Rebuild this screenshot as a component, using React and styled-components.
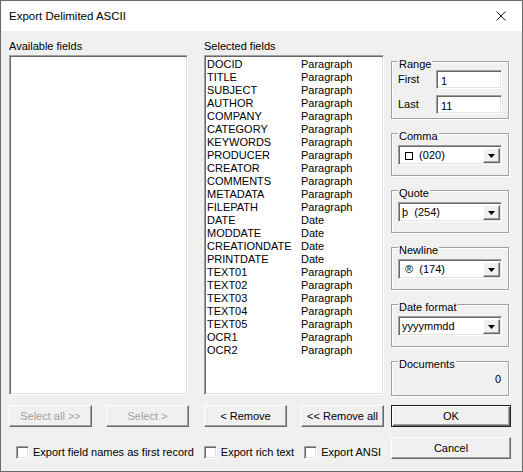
import React from 'react';
import styled, { createGlobalStyle } from 'styled-components';

const GlobalStyle = createGlobalStyle`
  html, body {
    margin: 0;
    padding: 0;
    background: #ffffff;
  }
  * {
    box-sizing: border-box;
  }
`;

const uiFont = `"Liberation Sans", Arial, sans-serif`;

// classic 3D edges
const sunken = `
  border: 1px solid;
  border-color: #a0a0a0 #ffffff #ffffff #a0a0a0;
  box-shadow: inset 1px 1px 0 #696969, inset -1px -1px 0 #e3e3e3;
`;

const raised = `
  border: 1px solid;
  border-color: #ffffff #696969 #696969 #ffffff;
  box-shadow: inset -1px -1px 0 #a0a0a0;
`;

const fields = [
  ['DOCID', 'Paragraph'],
  ['TITLE', 'Paragraph'],
  ['SUBJECT', 'Paragraph'],
  ['AUTHOR', 'Paragraph'],
  ['COMPANY', 'Paragraph'],
  ['CATEGORY', 'Paragraph'],
  ['KEYWORDS', 'Paragraph'],
  ['PRODUCER', 'Paragraph'],
  ['CREATOR', 'Paragraph'],
  ['COMMENTS', 'Paragraph'],
  ['METADATA', 'Paragraph'],
  ['FILEPATH', 'Paragraph'],
  ['DATE', 'Date'],
  ['MODDATE', 'Date'],
  ['CREATIONDATE', 'Date'],
  ['PRINTDATE', 'Date'],
  ['TEXT01', 'Paragraph'],
  ['TEXT02', 'Paragraph'],
  ['TEXT03', 'Paragraph'],
  ['TEXT04', 'Paragraph'],
  ['TEXT05', 'Paragraph'],
  ['OCR1', 'Paragraph'],
  ['OCR2', 'Paragraph'],
];

const DropArrow = () => (
  <svg width="7" height="4" viewBox="0 0 7 4">
    <path d="M0 0h7L3.5 4z" fill="#000" />
  </svg>
);

const CloseGlyph = () => (
  <svg width="10" height="10" viewBox="0 0 10 10">
    <path d="M0.5 0.5l9 9M9.5 0.5l-9 9" stroke="#1a1a1a" strokeWidth="1" fill="none" />
  </svg>
);

export default function App() {
  return (
    <>
      <GlobalStyle />
      <Window>
        <TitleBar>
          <Title>Export Delimited ASCII</Title>
          <CloseButton>
            <CloseGlyph />
          </CloseButton>
        </TitleBar>

        <Body>
          <FieldPanel $area="avail" $width={179}>
            <Caption>Available fields</Caption>
            <ListBox />
          </FieldPanel>

          <FieldPanel $area="sel" $width={180}>
            <Caption>Selected fields</Caption>
            <ListBox>
              {fields.map(([name, type]) => (
                <FieldRow key={name}>
                  <span>{name}</span>
                  <span>{type}</span>
                </FieldRow>
              ))}
            </ListBox>
          </FieldPanel>

          <SideStack>
            <Group $top={0} $bottom={4}>
              <Legend>Range</Legend>
              <RangeRows>
                <RangeRow>
                  <RangeLabel>First</RangeLabel>
                  <TextInput>1</TextInput>
                </RangeRow>
                <RangeRow>
                  <RangeLabel>Last</RangeLabel>
                  <TextInput>11</TextInput>
                </RangeRow>
              </RangeRows>
            </Group>

            <Group>
              <Legend>Comma</Legend>
              <Combo>
                <ComboValue>
                  <MissingGlyph />
                  {'  (020)'}
                </ComboValue>
                <ComboButton>
                  <DropArrow />
                </ComboButton>
              </Combo>
            </Group>

            <Group>
              <Legend>Quote</Legend>
              <Combo>
                <ComboValue>{'þ  (254)'}</ComboValue>
                <ComboButton>
                  <DropArrow />
                </ComboButton>
              </Combo>
            </Group>

            <Group>
              <Legend>Newline</Legend>
              <Combo>
                <ComboValue>{' ®  (174)'}</ComboValue>
                <ComboButton>
                  <DropArrow />
                </ComboButton>
              </Combo>
            </Group>

            <Group>
              <Legend>Date format</Legend>
              <Combo>
                <ComboValue>yyyymmdd</ComboValue>
                <ComboButton>
                  <DropArrow />
                </ComboButton>
              </Combo>
            </Group>

            <Group $bottom={9}>
              <Legend>Documents</Legend>
              <CountValue>0</CountValue>
            </Group>
          </SideStack>

          <ButtonPair $area="availbtn">
            <PushButton disabled>Select all &gt;&gt;</PushButton>
            <PushButton disabled>Select &gt;</PushButton>
          </ButtonPair>

          <ButtonPair $area="selbtn">
            <PushButton>&lt; Remove</PushButton>
            <PushButton>&lt;&lt; Remove all</PushButton>
          </ButtonPair>

          <DialogButton $area="ok" $primary>OK</DialogButton>

          <CheckRow>
            <CheckItem>
              <CheckBox />
              Export field names as first record
            </CheckItem>
            <CheckItem>
              <CheckBox />
              Export rich text
            </CheckItem>
            <CheckItem>
              <CheckBox />
              Export ANSI
            </CheckItem>
          </CheckRow>

          <DialogButton $area="cancel">Cancel</DialogButton>
        </Body>
      </Window>
    </>
  );
}

// Styled Components
const Window = styled.div`
  width: 523px;
  height: 472px;
  border: 1px solid #6b6b6b;
  display: flex;
  flex-direction: column;
  font-family: ${uiFont};
  font-size: 11px;
  color: #000;
  background: #f0f0f0;
`;

const TitleBar = styled.div`
  height: 30px;
  flex-shrink: 0;
  background: #ffffff;
  display: flex;
  align-items: center;
  justify-content: space-between;
  padding-left: 8px;
`;

const Title = styled.div`
  font-size: 11.5px;
  color: #000;
`;

const CloseButton = styled.div`
  width: 26px;
  height: 30px;
  display: flex;
  align-items: center;
  justify-content: flex-start;
`;

const Body = styled.div`
  flex: 1;
  padding: 8px 0 0 8px;
  display: grid;
  grid-template-columns: 195px 187px 120px;
  grid-template-rows: 356px 22px 22px;
  row-gap: 10px;
  grid-template-areas:
    "avail sel side"
    "availbtn selbtn ok"
    "checks checks cancel";
`;

const FieldPanel = styled.div`
  grid-area: ${({ $area }) => $area};
  width: ${({ $width }) => $width}px;
  display: flex;
  flex-direction: column;
`;

const Caption = styled.div`
  height: 16px;
  line-height: 15px;
`;

const ListBox = styled.div`
  ${sunken}
  flex: 1;
  background: #ffffff;
  padding: 2px 0 0 2px;
  overflow: hidden;
`;

const FieldRow = styled.div`
  display: grid;
  grid-template-columns: 94px 1fr;
  height: 13px;
  line-height: 13px;
  white-space: nowrap;
`;

const SideStack = styled.div`
  grid-area: side;
  padding-top: 13px;
  display: flex;
  flex-direction: column;
  gap: 5px;
`;

// the frame line of a Windows group box runs near the top of its caption
const Group = styled.fieldset`
  width: 118px;
  margin: 0;
  padding: ${({ $top }) => $top ?? 3}px 5px ${({ $bottom }) => $bottom ?? 10}px 6px;
  border: 1px solid #a0a0a0;
  box-shadow: inset 1px 1px 0 #ffffff, 1px 1px 0 #ffffff;
  min-width: 0;
`;

const Legend = styled.legend`
  padding: 6px 1px 0;
  line-height: 12px;
  height: 18px;
`;

const RangeRows = styled.div`
  display: flex;
  flex-direction: column;
  gap: 6px;
`;

const RangeRow = styled.div`
  display: flex;
  align-items: center;
`;

const RangeLabel = styled.span`
  width: 38px;
  padding-bottom: 2px;
`;

const TextInput = styled.div`
  ${sunken}
  width: 66px;
  height: 19px;
  background: #ffffff;
  padding: 4px 0 0 4px;
  line-height: 12px;
`;

const Combo = styled.div`
  ${sunken}
  width: 104px;
  height: 20px;
  background: #ffffff;
  display: flex;
  align-items: stretch;
  padding: 2px 1px 1px 2px;
`;

const ComboValue = styled.div`
  flex: 1;
  display: flex;
  align-items: center;
  white-space: pre;
  padding-left: 1px;
  line-height: 13px;
`;

const MissingGlyph = styled.span`
  display: inline-block;
  width: 8px;
  height: 8px;
  border: 1px solid #000;
  margin-left: 3px;
`;

const ComboButton = styled.div`
  ${raised}
  width: 17px;
  background: #f0f0f0;
  display: flex;
  align-items: center;
  justify-content: center;
`;

const CountValue = styled.div`
  text-align: right;
  line-height: 13px;
  padding-right: 2px;
`;

const ButtonPair = styled.div`
  grid-area: ${({ $area }) => $area};
  display: flex;
  gap: 14px;
`;

const PushButton = styled.button`
  ${raised}
  width: 83px;
  height: 22px;
  padding: 0;
  background: #f0f0f0;
  font-family: ${uiFont};
  font-size: 11px;
  color: #000;

  &:disabled {
    color: #a0a0a0;
  }
`;

const DialogButton = styled.button`
  grid-area: ${({ $area }) => $area};
  width: 120px;
  height: 22px;
  padding: 0;
  background: #f0f0f0;
  font-family: ${uiFont};
  font-size: 11px;
  color: #000;
  ${({ $primary }) =>
    $primary
      ? `
    border: 1px solid #1e1e1e;
    box-shadow: inset 1px 1px 0 #ffffff, inset -1px -1px 0 #696969, inset -2px -2px 0 #a0a0a0;
  `
      : raised}
`;

const CheckRow = styled.div`
  grid-area: checks;
  align-self: end;
  height: 13px;
  display: flex;
  align-items: center;
  gap: 10px;
  padding-left: 7px;
  white-space: nowrap;
`;

const CheckItem = styled.label`
  display: flex;
  align-items: center;
  gap: 4px;
  line-height: 13px;
`;

const CheckBox = styled.span`
  ${sunken}
  width: 13px;
  height: 13px;
  background: #ffffff;
  flex-shrink: 0;
`;
